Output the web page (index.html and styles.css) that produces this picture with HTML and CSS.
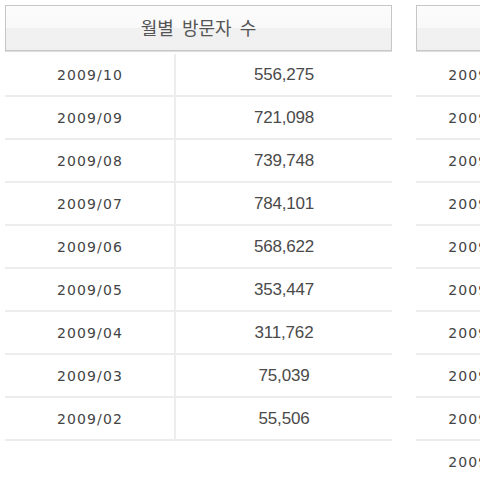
FILE: index.html
```html
<!DOCTYPE html>
<html lang="ko">
<head>
<meta charset="utf-8">
<link rel="stylesheet" href="styles.css">
</head>
<body>
<div class="wrap">
  <section class="panel">
    <div class="panel-head">월별 방문자 수</div>
    <table class="stats">
      <colgroup><col class="col-date"><col></colgroup>
      <tr><td class="date">2009/10</td><td class="num">556,275</td></tr>
      <tr><td class="date">2009/09</td><td class="num">721,098</td></tr>
      <tr><td class="date">2009/08</td><td class="num">739,748</td></tr>
      <tr><td class="date">2009/07</td><td class="num">784,101</td></tr>
      <tr><td class="date">2009/06</td><td class="num">568,622</td></tr>
      <tr><td class="date">2009/05</td><td class="num">353,447</td></tr>
      <tr><td class="date">2009/04</td><td class="num">311,762</td></tr>
      <tr><td class="date">2009/03</td><td class="num">75,039</td></tr>
      <tr><td class="date">2009/02</td><td class="num">55,506</td></tr>
    </table>
  </section>
  <section class="panel">
    <div class="panel-head">일별 방문자 수</div>
    <table class="stats daily">
      <colgroup><col class="col-date"><col></colgroup>
      <tr><td class="date">2009/10/31</td><td class="num">18,214</td></tr>
      <tr><td class="date">2009/10/30</td><td class="num">19,502</td></tr>
      <tr><td class="date">2009/10/29</td><td class="num">20,117</td></tr>
      <tr><td class="date">2009/10/28</td><td class="num">21,046</td></tr>
      <tr><td class="date">2009/10/27</td><td class="num">19,883</td></tr>
      <tr><td class="date">2009/10/26</td><td class="num">17,391</td></tr>
      <tr><td class="date">2009/10/25</td><td class="num">15,228</td></tr>
      <tr><td class="date">2009/10/24</td><td class="num">16,740</td></tr>
      <tr><td class="date">2009/10/23</td><td class="num">18,905</td></tr>
      <tr><td class="date">2009/10/22</td><td class="num">19,337</td></tr>
    </table>
  </section>
</div>
</body>
</html>
```
FILE: styles.css
```css
html, body {
  margin: 0;
  padding: 0;
  background: #fff;
  overflow: hidden;
}
.wrap {
  display: flex;
  gap: 24px;
  padding: 5px;
  width: 1000px;
}
.panel {
  width: 387px;
  flex: none;
}
.panel-head {
  box-sizing: border-box;
  height: 46px;
  border: 1px solid #c6c6c6;
  box-shadow: 0 1px 0 #dedede;
  background: linear-gradient(#fcfcfc 0%, #f9f9f9 50%, #f1f1f1 51%, #f0f0f0 100%);
  display: flex;
  align-items: center;
  justify-content: center;
  font-family: "Noto Sans CJK KR", "Noto Sans", sans-serif;
  font-size: 18px;
  color: #555;
  word-spacing: 3px;
  padding-bottom: 3px;
}
.stats {
  width: 387px;
  border-collapse: collapse;
  margin-top: 3px;
  table-layout: fixed;
}
.stats .col-date {
  width: 170px;
}
.stats.daily .col-date {
  width: 156px;
}
.stats td {
  height: 41px;
  padding: 0;
  border-bottom: 2px solid #ededed;
  text-align: center;
  color: #444;
}
.stats td.date {
  border-right: 2px solid #ededed;
  font-family: "DejaVu Sans", Verdana, sans-serif;
  font-size: 14px;
  letter-spacing: 1.1px;
  color: #444;
  padding-left: 1px;
}
.stats td.num {
  font-family: "Liberation Sans", Arial, sans-serif;
  font-size: 17px;
  color: #4a4a4a;
  letter-spacing: -0.2px;
}
```
